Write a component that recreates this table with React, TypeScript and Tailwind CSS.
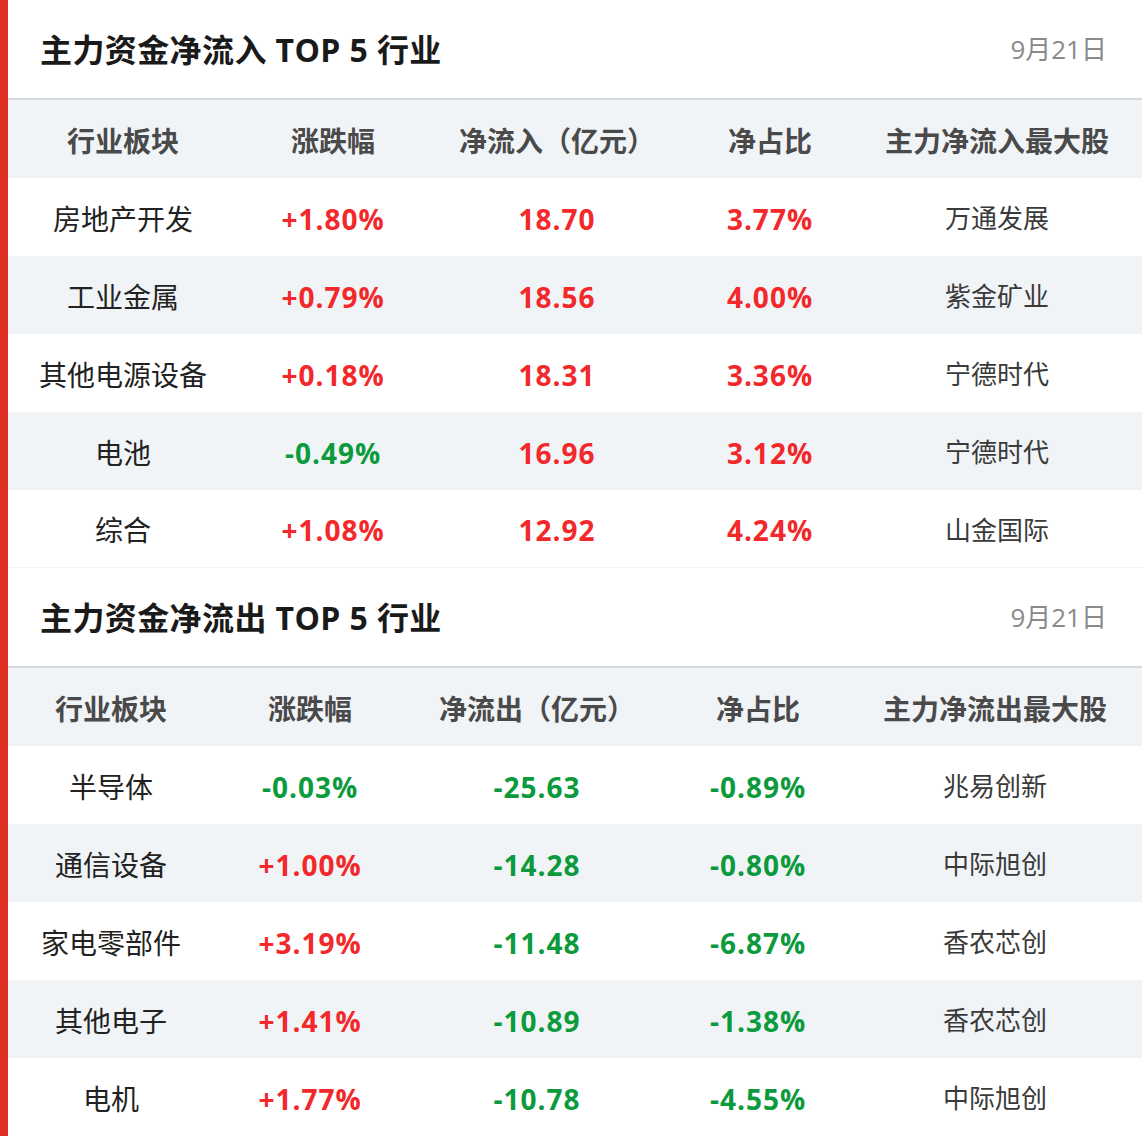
import React from 'react';

type Row = {
  name: string;
  change: string;
  flow: string;
  ratio: string;
  stock: string;
};

interface TableProps {
  title: string;
  date: string;
  cols: string[];
  grid: string;
  rows: Row[];
  last?: boolean;
}

const inflow: Row[] = [
  { name: '房地产开发', change: '+1.80%', flow: '18.70', ratio: '3.77%', stock: '万通发展' },
  { name: '工业金属', change: '+0.79%', flow: '18.56', ratio: '4.00%', stock: '紫金矿业' },
  { name: '其他电源设备', change: '+0.18%', flow: '18.31', ratio: '3.36%', stock: '宁德时代' },
  { name: '电池', change: '-0.49%', flow: '16.96', ratio: '3.12%', stock: '宁德时代' },
  { name: '综合', change: '+1.08%', flow: '12.92', ratio: '4.24%', stock: '山金国际' },
];

const outflow: Row[] = [
  { name: '半导体', change: '-0.03%', flow: '-25.63', ratio: '-0.89%', stock: '兆易创新' },
  { name: '通信设备', change: '+1.00%', flow: '-14.28', ratio: '-0.80%', stock: '中际旭创' },
  { name: '家电零部件', change: '+3.19%', flow: '-11.48', ratio: '-6.87%', stock: '香农芯创' },
  { name: '其他电子', change: '+1.41%', flow: '-10.89', ratio: '-1.38%', stock: '香农芯创' },
  { name: '电机', change: '+1.77%', flow: '-10.78', ratio: '-4.55%', stock: '中际旭创' },
];

// 红涨绿跌
const tone = (v: string) => (v.startsWith('-') ? 'text-[#0b9a3c]' : 'text-[#f2282b]');

function FlowTable({ title, date, cols, grid, rows, last }: TableProps) {
  return (
    <section>
      {/* Title */}
      <div className="h-[100px] pt-[1px] flex items-center justify-between pl-8 pr-[35px] border-b-2 border-[#d6d9dd]">
        <h2 className="text-[32px] font-bold text-[#1a1a1a] tracking-[0.4px]">{title}</h2>
        <span className="text-[26px] text-[#8a8a8a]">{date}</span>
      </div>

      {/* Header row */}
      <div className={`grid ${grid} h-[78px] pt-[3px] items-center bg-[#f1f4f7] text-[28px] font-bold text-[#4a4a4a]`}>
        {cols.map((c) => (
          <span key={c} className="text-center whitespace-nowrap">
            {c}
          </span>
        ))}
      </div>

      {rows.map((r, i) => (
        <div
          key={r.name}
          className={`grid ${grid} h-[78px] pt-[3px] items-center text-[28px] ${i % 2 === 1 ? 'bg-[#f1f4f7]' : 'bg-white'} ${
            !last && i === rows.length - 1 ? 'border-b border-[#f3f3f3]' : ''
          }`}
        >
          <span className="text-center text-[#222]">{r.name}</span>
          <span className={`text-center font-bold tracking-[1px] ${tone(r.change)}`}>{r.change}</span>
          <span className={`text-center font-bold tracking-[1px] ${tone(r.flow)}`}>{r.flow}</span>
          <span className={`text-center font-bold tracking-[1px] ${tone(r.ratio)}`}>{r.ratio}</span>
          <span className="text-center text-[26px] text-[#3a3a3a]">{r.stock}</span>
        </div>
      ))}
    </section>
  );
}

export default function App() {
  return (
    <div
      className="w-[1142px] h-[1136px] bg-white flex overflow-hidden"
      style={{ fontFamily: '"Open Sans", "Noto Sans CJK SC", sans-serif' }}
    >
      <div className="w-2 shrink-0 bg-[#e03024]" />
      <div className="flex-1 flex flex-col">
        <FlowTable
          title="主力资金净流入 TOP 5 行业"
          date="9月21日"
          cols={['行业板块', '涨跌幅', '净流入（亿元）', '净占比', '主力净流入最大股']}
          grid="grid-cols-[230px_190px_258px_168px_286px]"
          rows={inflow}
        />
        <FlowTable
          title="主力资金净流出 TOP 5 行业"
          date="9月21日"
          cols={['行业板块', '涨跌幅', '净流出（亿元）', '净占比', '主力净流出最大股']}
          grid="grid-cols-[206px_192px_262px_180px_294px]"
          rows={outflow}
          last
        />
      </div>
    </div>
  );
}
